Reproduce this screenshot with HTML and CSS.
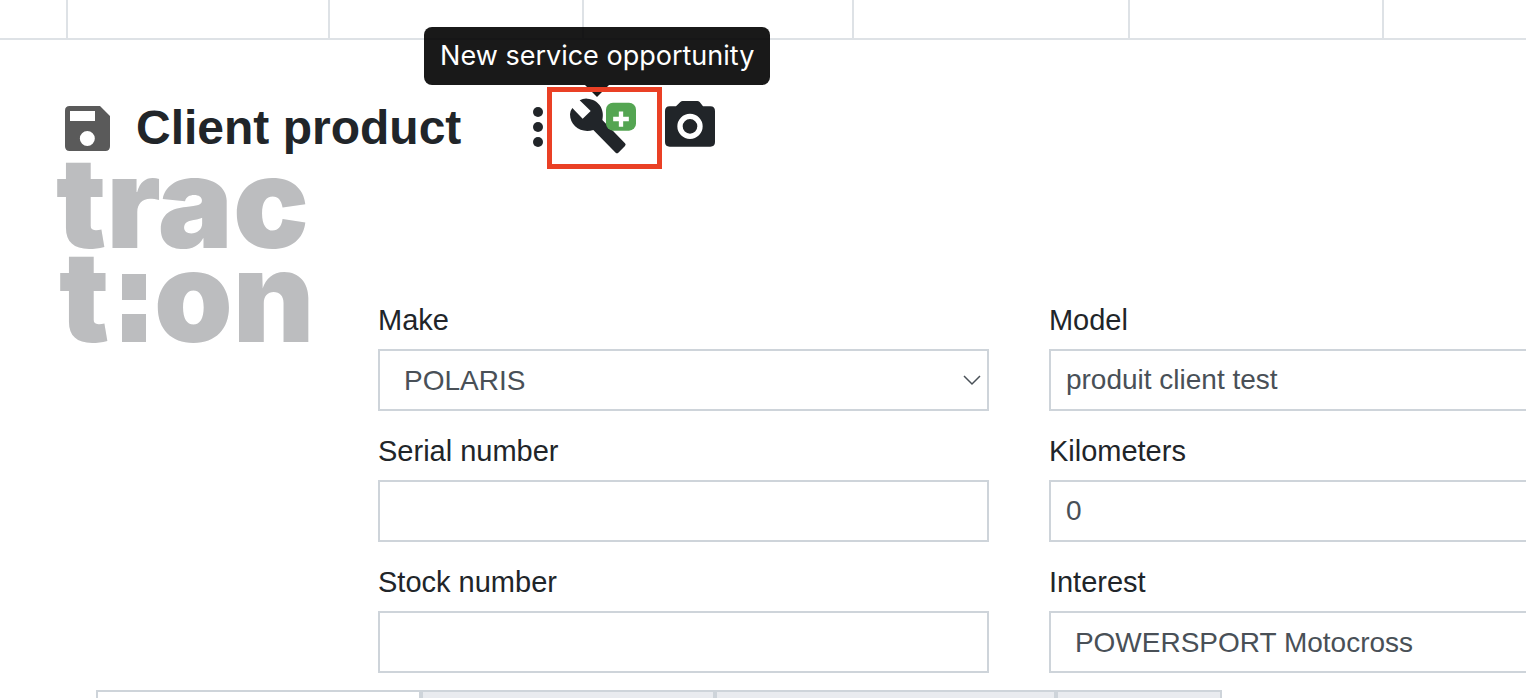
FILE: index.html
```html
<!DOCTYPE html>
<html lang="en">
<head>
<meta charset="UTF-8" />
<meta name="viewport" content="width=device-width, initial-scale=1" />
<title>Client product</title>
<link rel="stylesheet" href="styles.css">
</head>
<body>

<div class="page">
  <div class="topbar">
    <div class="cell"></div>
    <div class="cell"></div>
    <div class="cell"></div>
    <div class="cell"></div>
    <div class="cell"></div>
    <div class="cell"></div>
  </div>

  <header class="header">
    <button type="button" class="icon-btn" aria-label="Save">
      <svg width="45" height="45" viewBox="0 0 135 135">
        <path fill="#5a5a5a" fill-rule="evenodd" d="M14 0H105L135 30V121Q135 135 121 135H14Q0 135 0 121V14Q0 0 14 0ZM15 15V45H90V15ZM67 75A22 22 0 1 0 67 120A22 22 0 1 0 67 75Z"/>
      </svg>
    </button>
    <h1 class="title">Client product</h1>
    <div class="actions">
      <button type="button" class="icon-btn dots" aria-label="More options">
        <svg width="10" height="40" viewBox="0 0 10 40" fill="#212529">
          <circle cx="5" cy="5" r="5"/>
          <circle cx="5" cy="20" r="5"/>
          <circle cx="5" cy="35" r="5"/>
        </svg>
      </button>
      <div class="service">
        <div class="tooltip" role="tooltip" id="serviceTip">New service opportunity</div>
        <button type="button" class="icon-btn service-btn" aria-label="New service opportunity" aria-describedby="serviceTip">
          <svg width="66" height="56" viewBox="120 55 198 168">
            <path fill="#212529" d="M149 62Q160 56 172 57C205 59 225 88 217 121L285 191Q289 195 285 199L265 219Q261 223 257 219L190 151C155 162 120 140 120 104Q120 94 127 85L158 117L182 94Z"/>
            <rect x="228" y="69" width="90" height="84" rx="21" fill="#54a552"/>
            <path stroke="#fff" stroke-width="13" stroke-linecap="square" d="M256 118H290M273 102V135"/>
          </svg>
        </button>
      </div>
      <button type="button" class="icon-btn camera" aria-label="Take picture">
        <svg width="50" height="46" viewBox="0 0 150 138">
          <path fill="#212529" d="M14 16H33L46 3Q49 0 53 0H97Q101 0 104 3L114 16H136Q150 16 150 30V123Q150 137 136 137H14Q0 137 0 123V30Q0 16 14 16Z"/>
          <circle cx="75" cy="76" r="30" fill="none" stroke="#fff" stroke-width="16"/>
        </svg>
      </button>
    </div>
  </header>

  <main class="content">
    <div class="logo">
      <svg width="270" height="180" viewBox="0 0 270 180" role="img" aria-label="traction">
        <text x="0" y="79">trac</text>
        <text x="3" y="173">t</text>
        <rect x="66" y="105" width="24" height="26"/>
        <rect x="66" y="145" width="24" height="28"/>
        <text x="98" y="173">on</text>
      </svg>
    </div>

    <form class="fields">
      <div class="field">
        <label for="make">Make</label>
        <select id="make" class="control arrow">
          <option>POLARIS</option>
        </select>
      </div>
      <div class="field">
        <label for="model">Model</label>
        <input type="text" id="model" class="control" value="produit client test">
      </div>
      <div class="field">
        <label for="serial">Serial number</label>
        <input type="text" id="serial" class="control">
      </div>
      <div class="field">
        <label for="km">Kilometers</label>
        <input type="text" id="km" class="control" value="0">
      </div>
      <div class="field">
        <label for="stock">Stock number</label>
        <input type="text" id="stock" class="control">
      </div>
      <div class="field">
        <label for="interest">Interest</label>
        <select id="interest" class="control arrow">
          <option>POWERSPORT Motocross</option>
        </select>
      </div>
    </form>
  </main>

  <div class="tabs">
    <div class="tab active"></div>
    <div class="tab"></div>
    <div class="tab"></div>
    <div class="tab"></div>
  </div>
</div>

</body>
</html>
```
FILE: styles.css
```css
* {
  box-sizing: border-box;
}
body {
  margin: 0;
  background-color: #fff;
  color: #212529;
  font-family: "Liberation Sans", Helvetica, Arial, sans-serif;
  font-size: 28px;
}
.page {
  height: 100vh;
  overflow: hidden;
}

/* bottom edge of the menu row */
.topbar {
  display: grid;
  grid-template-columns: 68fr 262fr 254fr 270fr 276fr 254fr 142fr;
  height: 40px;
  border-bottom: 2px solid #dee2e6;
}
.topbar .cell {
  border-right: 2px solid #dee2e6;
}

.header {
  display: flex;
  align-items: center;
  padding: 47px 0 0 65px;
}
.title {
  margin: 0 0 0 26px;
  font-size: 48px;
  line-height: 58px;
  font-weight: bold;
  white-space: nowrap;
}
.icon-btn {
  display: block;
  padding: 0;
  border: 0;
  background: none;
  cursor: pointer;
}
.icon-btn svg {
  display: block;
}
.actions {
  display: flex;
  align-items: center;
  margin-left: 72px;
}
.dots {
  padding: 0 4px 2px 0;
}
.service {
  position: relative;
}
.service-btn {
  position: relative;
  padding: 6px 21px 10px 18px;
  border: 5px solid #ea4025;
}
.camera {
  padding: 0 0 8px 3px;
}

.tooltip {
  position: absolute;
  bottom: 84px;
  right: -108px;
  padding: 8px 16px;
  border-radius: 8px;
  background-color: rgba(0, 0, 0, 0.9);
  color: #fff;
  font-family: Inter, sans-serif;
  font-size: 27px;
  line-height: 42px;
  white-space: nowrap;
}
.tooltip::after {
  content: "";
  position: absolute;
  top: 100%;
  left: 50%;
  margin-left: -12px;
  border: 12px solid transparent;
  border-top-color: rgba(0, 0, 0, 0.9);
  border-bottom: 0;
}

.content {
  display: flex;
}
.logo {
  flex: none;
  width: 322px;
  margin-left: 56px;
}
.logo svg {
  display: block;
  overflow: visible;
  fill: #bcbdbf;
  font-family: Inter, sans-serif;
  font-size: 126px;
  font-weight: 900;
}

.fields {
  flex: none;
  display: grid;
  grid-template-columns: 1fr 1fr;
  gap: 19px 60px;
  width: 84vw;
  padding-top: 130px;
}
.field label {
  display: block;
  margin-bottom: 8px;
  font-size: 29px;
  line-height: 42px;
}
.control {
  display: block;
  width: 100%;
  height: 62px;
  padding: 0 15px;
  border: 2px solid #ced4da;
  border-radius: 0;
  background-color: #fff;
  color: #495057;
  font-family: inherit;
  font-size: 28px;
}
.control:focus {
  outline: none;
  border-color: #80bdff;
}
.arrow {
  appearance: none;
  padding: 0 24px;
  background-image: url("data:image/svg+xml,%3Csvg xmlns='http://www.w3.org/2000/svg' width='18' height='11' fill='none' stroke='%23495057' stroke-width='1.5'%3E%3Cpath d='M1 1l8 8 8-8'/%3E%3C/svg%3E");
  background-repeat: no-repeat;
  background-position: right 6px center;
}

.tabs {
  display: grid;
  grid-template-columns: 325fr 294fr 341fr 166fr;
  width: 73.8vw;
  margin: 17px 0 0 96px;
}
.tab {
  height: 60px;
  border: 2px solid #ced4da;
  background-color: #e9ebef;
}
.tab.active {
  background-color: #fff;
}
```
